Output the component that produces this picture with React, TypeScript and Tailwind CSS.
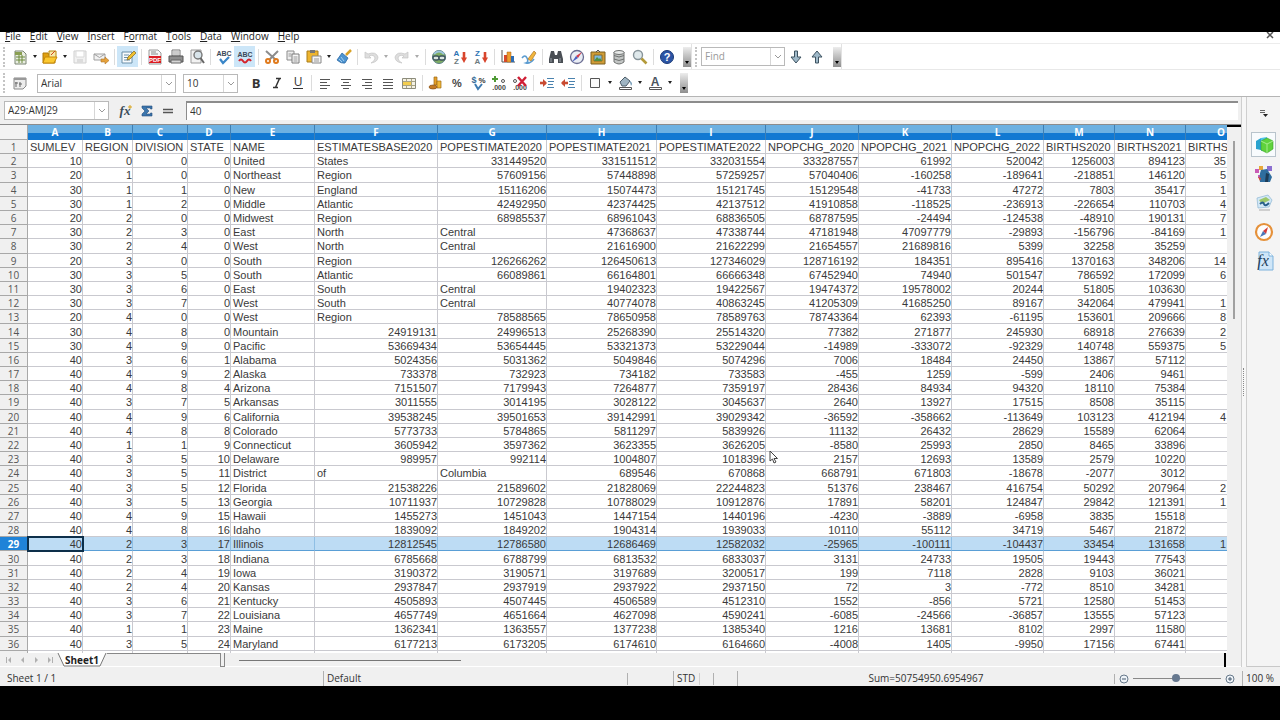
import { useState } from 'react'
import type { ReactNode } from 'react'
import clsx from 'clsx'

const MENUS = ['File', 'Edit', 'View', 'Insert', 'Format', 'Tools', 'Data', 'Window', 'Help']
const MENU_KEYS = [0, 0, 0, 0, 1, 0, 0, 0, 0]

const COLUMNS = [
  { id: 'A', width: 'w-[55px]' },
  { id: 'B', width: 'w-[50px]' },
  { id: 'C', width: 'w-[55px]' },
  { id: 'D', width: 'w-[43px]' },
  { id: 'E', width: 'w-[84px]' },
  { id: 'F', width: 'w-[123px]' },
  { id: 'G', width: 'w-[109px]' },
  { id: 'H', width: 'w-[110px]' },
  { id: 'I', width: 'w-[109px]' },
  { id: 'J', width: 'w-[93px]' },
  { id: 'K', width: 'w-[93px]' },
  { id: 'L', width: 'w-[92px]' },
  { id: 'M', width: 'w-[71px]' },
  { id: 'N', width: 'w-[71px]' },
  { id: 'O', width: 'w-[71px]' },
]

const SHEET = `
SUMLEV,REGION,DIVISION,STATE,NAME,ESTIMATESBASE2020,POPESTIMATE2020,POPESTIMATE2021,POPESTIMATE2022,NPOPCHG_2020,NPOPCHG_2021,NPOPCHG_2022,BIRTHS2020,BIRTHS2021,BIRTHS2
10,0,0,0,United,States,331449520,331511512,332031554,333287557,61992,520042,1256003,894123,35
20,1,0,0,Northeast,Region,57609156,57448898,57259257,57040406,-160258,-189641,-218851,146120,5
30,1,1,0,New,England,15116206,15074473,15121745,15129548,-41733,47272,7803,35417,1
30,1,2,0,Middle,Atlantic,42492950,42374425,42137512,41910858,-118525,-236913,-226654,110703,4
20,2,0,0,Midwest,Region,68985537,68961043,68836505,68787595,-24494,-124538,-48910,190131,7
30,2,3,0,East,North,Central,47368637,47338744,47181948,47097779,-29893,-156796,-84169,1
30,2,4,0,West,North,Central,21616900,21622299,21654557,21689816,5399,32258,35259,
20,3,0,0,South,Region,126266262,126450613,127346029,128716192,184351,895416,1370163,348206,14
30,3,5,0,South,Atlantic,66089861,66164801,66666348,67452940,74940,501547,786592,172099,6
30,3,6,0,East,South,Central,19402323,19422567,19474372,19578002,20244,51805,103630,
30,3,7,0,West,South,Central,40774078,40863245,41205309,41685250,89167,342064,479941,1
20,4,0,0,West,Region,78588565,78650958,78589763,78743364,62393,-61195,153601,209666,8
30,4,8,0,Mountain,24919131,24996513,25268390,25514320,77382,271877,245930,68918,276639,2
30,4,9,0,Pacific,53669434,53654445,53321373,53229044,-14989,-333072,-92329,140748,559375,5
40,3,6,1,Alabama,5024356,5031362,5049846,5074296,7006,18484,24450,13867,57112,
40,4,9,2,Alaska,733378,732923,734182,733583,-455,1259,-599,2406,9461,
40,4,8,4,Arizona,7151507,7179943,7264877,7359197,28436,84934,94320,18110,75384,
40,3,7,5,Arkansas,3011555,3014195,3028122,3045637,2640,13927,17515,8508,35115,
40,4,9,6,California,39538245,39501653,39142991,39029342,-36592,-358662,-113649,103123,412194,4
40,4,8,8,Colorado,5773733,5784865,5811297,5839926,11132,26432,28629,15589,62064,
40,1,1,9,Connecticut,3605942,3597362,3623355,3626205,-8580,25993,2850,8465,33896,
40,3,5,10,Delaware,989957,992114,1004807,1018396,2157,12693,13589,2579,10220,
40,3,5,11,District,of,Columbia,689546,670868,668791,671803,-18678,-2077,3012,
40,3,5,12,Florida,21538226,21589602,21828069,22244823,51376,238467,416754,50292,207964,2
40,3,5,13,Georgia,10711937,10729828,10788029,10912876,17891,58201,124847,29842,121391,1
40,4,9,15,Hawaii,1455273,1451043,1447154,1440196,-4230,-3889,-6958,3835,15518,
40,4,8,16,Idaho,1839092,1849202,1904314,1939033,10110,55112,34719,5467,21872,
40,2,3,17,Illinois,12812545,12786580,12686469,12582032,-25965,-100111,-104437,33454,131658,1
40,2,3,18,Indiana,6785668,6788799,6813532,6833037,3131,24733,19505,19443,77543,
40,2,4,19,Iowa,3190372,3190571,3197689,3200517,199,7118,2828,9103,36021,
40,2,4,20,Kansas,2937847,2937919,2937922,2937150,72,3,-772,8510,34281,
40,3,6,21,Kentucky,4505893,4507445,4506589,4512310,1552,-856,5721,12580,51453,
40,3,7,22,Louisiana,4657749,4651664,4627098,4590241,-6085,-24566,-36857,13555,57123,
40,1,1,23,Maine,1362341,1363557,1377238,1385340,1216,13681,8102,2997,11580,
40,3,5,24,Maryland,6177213,6173205,6174610,6164660,-4008,1405,-9950,17156,67441,
`

const ROWS = SHEET.trim().split('\n').map((line) => line.split(','))
const SELECTED_ROW = 29

const ICONS: Record<string, ReactNode> = {
  new: (
    <>
      <path d="M3 2h8l3 3v10H3z" fill="#e9eee2" stroke="#7b8573" />
      <path d="M4 8h9M4 11h9M7 6v8M10 6v8" stroke="#6d8a3c" />
      <path d="M3 3h7v3H3z" fill="#8a9f52" />
    </>
  ),
  open: (
    <>
      <path d="M1 4h5l1 2h6v8H1z" fill="#e0a010" stroke="#b07a08" />
      <path d="M7 2h7v7H7z" fill="#f7e9a8" stroke="#b8860b" />
      <path d="M3 8h12l-3 6H1z" fill="#fbc931" stroke="#c88a0a" />
      <path d="M9 6l4-4" stroke="#d2451e" />
    </>
  ),
  save: (
    <g opacity=".5">
      <path d="M2 2h12v12H2z" fill="#e4e4e4" stroke="#a3a3a3" />
      <path d="M4 2h8v6H4z" fill="#fff" stroke="#b5b5b5" />
      <path d="M5 10h6v4H5z" fill="#bbb" />
    </g>
  ),
  mail: (
    <>
      <path d="M1 5h11v6H1z" fill="#f2f2f2" stroke="#a0a0a0" />
      <path d="M1 5l5.500 3.500L12 5" stroke="#a0a0a0" fill="none" />
      <path d="M8 10h4V8l4 3.500-4 3.500v-2H8z" fill="#e6a23c" stroke="#b0762a" strokeWidth=".6" />
    </>
  ),
  edit: (
    <>
      <path d="M2 3h10v11H2z" fill="#f8fbfd" stroke="#6b8fa8" />
      <path d="M4 6h5M4 8.500h4M4 11h6" stroke="#6b8fa8" />
      <path d="M7 11l1-3 6-6 2 2-6 6z" fill="#f0c030" stroke="#7c6420" strokeWidth=".7" />
    </>
  ),
  pdf: (
    <>
      <path d="M2 1h9l3 3v11H2z" fill="#f5f5f5" stroke="#999" />
      <path d="M4 3h5M4 5h7" stroke="#888" />
      <path d="M2 7h12v7H2z" fill="#dc1c24" />
      <text x="8" y="13" fontSize="6" fontWeight="700" textAnchor="middle" fill="#fff" fontFamily="Liberation Sans, sans-serif">PDF</text>
    </>
  ),
  print: (
    <>
      <path d="M4 1h8v6H4z" fill="#fff" stroke="#777" />
      <path d="M1 7h14v6H1z" fill="#8e8e8e" stroke="#555" />
      <path d="M3 11h10v3H3z" fill="#d6d6d6" stroke="#666" />
      <path d="M5 3h6M5 5h6" stroke="#999" />
    </>
  ),
  preview: (
    <>
      <path d="M2 1h10v13H2z" fill="#f2f2f2" stroke="#999" />
      <circle cx="9" cy="6" r="4" fill="#d8e4ea" stroke="#777" strokeWidth="1.400" />
      <path d="M11.500 9l3.500 5" stroke="#666" strokeWidth="2" />
    </>
  ),
  spell: (
    <>
      <text x="8" y="7" fontSize="7" fontWeight="700" textAnchor="middle" fill="#3b4a58" fontFamily="Liberation Sans, sans-serif">ABC</text>
      <path d="M4 10l3 4 6-6" stroke="#3a86c8" strokeWidth="2.200" fill="none" />
    </>
  ),
  autospell: (
    <>
      <text x="8" y="8" fontSize="7" fontWeight="700" textAnchor="middle" fill="#3b4a58" fontFamily="Liberation Sans, sans-serif">ABC</text>
      <path d="M2 12q2-3 4 0t4 0 4 0" stroke="#d5232b" strokeWidth="2" fill="none" />
    </>
  ),
  cut: (
    <>
      <path d="M2 2l10 9M14 2L5 11" stroke="#8c8c8c" strokeWidth="2" />
      <circle cx="4" cy="12" r="2" fill="none" stroke="#e07a1c" strokeWidth="2" />
      <circle cx="12" cy="12" r="2" fill="none" stroke="#e07a1c" strokeWidth="2" />
    </>
  ),
  copy: (
    <>
      <path d="M2 2h7v9H2z" fill="#eee" stroke="#8b8b8b" />
      <path d="M7 5h7v9H7z" fill="#f6f6f6" stroke="#7b7b7b" />
      <path d="M8.500 8h4M8.500 10h4M8.500 12h4M3.500 5h3M3.500 7h3" stroke="#999" />
    </>
  ),
  paste: (
    <>
      <path d="M1 2h11v11H1z" fill="#eeb52e" stroke="#a87c1a" />
      <path d="M4 1h5v3H4z" fill="#777" />
      <path d="M6 7h9v7H6z" fill="#f5f5f5" stroke="#888" />
      <path d="M8 10h5M8 12h5" stroke="#999" />
    </>
  ),
  brush: (
    <>
      <path d="M15 1l-5 5" stroke="#d9a227" strokeWidth="2.500" />
      <path d="M6 4l6 5-3 5q-4 1-8-3z" fill="#4d94d0" stroke="#2d6aa5" strokeWidth=".8" />
      <path d="M3 10l3 3M5 8l3 4" stroke="#b9dcf5" strokeWidth=".8" />
    </>
  ),
  undo: <path d="M2 3v6h6L6 7q5-2 6 2 0 3-4 5 7-1 7-6-2-6-10-3z" fill="#dedede" stroke="#c4c4c4" strokeWidth=".7" />,
  redo: <path d="M14 3v6H8l2-2Q5 5 4 9q0 3 4 5-7-1-7-6 2-6 10-3z" fill="#dedede" stroke="#c4c4c4" strokeWidth=".7" />,
  link: (
    <>
      <circle cx="8" cy="8" r="6.500" fill="#7fae63" stroke="#5c8088" />
      <path d="M3 5q5-5 10 0" stroke="#9cc4dc" strokeWidth="2" fill="none" />
      <rect x="2" y="7" width="6" height="4" rx="2" fill="#dbe6e2" stroke="#3f565f" strokeWidth="1.300" />
      <rect x="8" y="7" width="6" height="4" rx="2" fill="#dbe6e2" stroke="#3f565f" strokeWidth="1.300" />
    </>
  ),
  sortaz: (
    <>
      <text x="4.500" y="7" fontSize="8" fontWeight="700" textAnchor="middle" fill="#2f74b5" fontFamily="Liberation Sans, sans-serif">A</text>
      <text x="4.500" y="15" fontSize="8" fontWeight="700" textAnchor="middle" fill="#6c7a80" fontFamily="Liberation Sans, sans-serif">Z</text>
      <path d="M12 3v7" stroke="#d8442c" strokeWidth="2.600" />
      <path d="M9 8.500h6L12 14z" fill="#d8442c" />
    </>
  ),
  sortza: (
    <>
      <text x="4.500" y="7" fontSize="8" fontWeight="700" textAnchor="middle" fill="#2f74b5" fontFamily="Liberation Sans, sans-serif">Z</text>
      <text x="4.500" y="15" fontSize="8" fontWeight="700" textAnchor="middle" fill="#6c7a80" fontFamily="Liberation Sans, sans-serif">A</text>
      <path d="M12 3v7" stroke="#d8442c" strokeWidth="2.600" />
      <path d="M9 8.500h6L12 14z" fill="#d8442c" />
    </>
  ),
  chart: (
    <>
      <path d="M2 1v12h13" stroke="#555" fill="none" />
      <path d="M4 6h3v7H4z" fill="#d9482b" />
      <path d="M7 3h4v10H7z" fill="#ee9d2e" stroke="#a3601b" strokeWidth=".5" />
      <path d="M11 7h3v6h-3z" fill="#2d6db5" />
    </>
  ),
  draw: (
    <>
      <path d="M1 9q3-4 5 0t-1 5q4 1 8-4" stroke="#5b9bd0" strokeWidth="1.600" fill="none" />
      <path d="M7 10l6-8 2 2-5 8z" fill="#f2b63c" stroke="#a9752a" strokeWidth=".7" />
    </>
  ),
  binoculars: (
    <>
      <path d="M3 2h3l1 4h2l1-4h3l2 8v4h-5v-4H6v4H1v-4z" fill="#4a4f55" />
      <path d="M3 9v4M12 9v4" stroke="#9aa2a9" />
    </>
  ),
  navigator: (
    <>
      <circle cx="8" cy="8" r="6.500" fill="#e9edf5" stroke="#6a6d92" strokeWidth="1.300" />
      <path d="M13 3L9 9 7 7z" fill="#d53a49" />
      <path d="M3 13l4-6 2 2z" fill="#4a5fc0" />
    </>
  ),
  gallery: (
    <>
      <path d="M1 3h14v12H1z" fill="#cf9c36" stroke="#7d6023" />
      <path d="M4 6h8v6H4z" fill="#79b9dd" stroke="#8a6a28" />
      <path d="M4 12l3-4 2 2 1-1 2 3z" fill="#4d8f42" />
      <path d="M6 3l2-2 2 2" stroke="#555" fill="none" />
    </>
  ),
  database: (
    <>
      <path d="M3 3v10q5 4 10 0V3z" fill="#c2c5c4" stroke="#6e7170" />
      <ellipse cx="8" cy="3.500" rx="5" ry="2" fill="#e8eae9" stroke="#6e7170" />
      <path d="M3 6.500q5 3 10 0M3 10q5 3 10 0" stroke="#6e7170" fill="none" />
    </>
  ),
  magnifier: (
    <>
      <circle cx="6" cy="6" r="4.500" fill="#dfe9ec" stroke="#87949a" strokeWidth="1.400" />
      <path d="M9.500 9.500l5 5" stroke="#b39a3a" strokeWidth="2.600" />
    </>
  ),
  help: (
    <>
      <circle cx="8" cy="8" r="6.500" fill="#2c55a5" stroke="#1a3a78" />
      <text x="8" y="12" fontSize="11" fontWeight="700" textAnchor="middle" fill="#fff" fontFamily="Liberation Sans, sans-serif">?</text>
    </>
  ),
  down: <path d="M6.500 2h3v6H13l-5 6-5-6h3.500z" fill="#9fb9c9" stroke="#3d5260" />,
  up: <path d="M6.500 14h3V8H13L8 2 3 8h3.500z" fill="#9fb9c9" stroke="#3d5260" />,
  styles: (
    <>
      <path d="M2 3h12v8l-3 3H2z" fill="#ececec" stroke="#888" />
      <path d="M2 3h12v2H2z" fill="#999" />
      <path d="M4 7v5M3 8h3M8 7v5M7 9h3" stroke="#666" />
    </>
  ),
  bold: <text x="8" y="13" fontSize="13" fontWeight="700" textAnchor="middle" fill="#333" fontFamily="Open Sans, sans-serif">B</text>,
  italic: <path d="M7 3.500h5M10.500 3.500l-4 9M4 12.500h5" stroke="#333" strokeWidth="1.500" />,
  underline: (
    <>
      <text x="8" y="11" fontSize="12" textAnchor="middle" fill="#333" fontFamily="Open Sans, sans-serif">U</text>
      <path d="M3 13.500h10" stroke="#333" />
    </>
  ),
  left: <path d="M3 4.500h10M3 7.500h7M3 10.500h10M3 13.500h7" stroke="#555" />,
  center: <path d="M3 4.500h10M5 7.500h6M3 10.500h10M5 13.500h6" stroke="#555" />,
  right: <path d="M3 4.500h10M6 7.500h7M3 10.500h10M6 13.500h7" stroke="#555" />,
  justify: <path d="M3 4.500h10M3 7.500h10M3 10.500h10M3 13.500h10" stroke="#555" />,
  merge: (
    <>
      <path d="M1.500 3.500h13v10h-13z" fill="#f4f1e4" stroke="#8c8c7c" />
      <path d="M2 6h8v4H2z" fill="#f3cd4e" />
      <path d="M2 6.500h12M2 10.500h12M5.500 4v3M10.500 4v9M5.500 10v3" stroke="#a8a384" />
    </>
  ),
  currency: (
    <>
      <path d="M6 2h3v8H6z" fill="#e5a02a" stroke="#9b6714" strokeWidth=".7" />
      <path d="M9 6h4v7H9z" fill="#f0b838" stroke="#9b6714" strokeWidth=".7" />
      <ellipse cx="5" cy="12" rx="4" ry="2" fill="#c47a24" stroke="#85501a" strokeWidth=".7" />
    </>
  ),
  percent: <text x="8" y="12" fontSize="11" fontWeight="700" textAnchor="middle" fill="#444" fontFamily="Liberation Sans, sans-serif">%</text>,
  number: (
    <>
      <text x="4" y="8" fontSize="9" fontWeight="700" textAnchor="middle" fill="#356a96" fontFamily="Liberation Sans, sans-serif">$</text>
      <text x="12" y="8" fontSize="8" fontWeight="700" textAnchor="middle" fill="#333" fontFamily="Liberation Sans, sans-serif">%</text>
      <path d="M5 9l3 5 4-5" stroke="#3d7ab0" strokeWidth="2" fill="none" />
    </>
  ),
  adddec: (
    <>
      <path d="M4 1v6M1 4h6" stroke="#4f9a35" strokeWidth="2" />
      <circle cx="12" cy="6" r="1.500" fill="none" stroke="#555" />
      <text x="8" y="15" fontSize="7" fontWeight="700" textAnchor="middle" fill="#444" fontFamily="Liberation Sans, sans-serif">.000</text>
    </>
  ),
  deldec: (
    <>
      <circle cx="3" cy="6" r="1.500" fill="none" stroke="#555" />
      <text x="8" y="15" fontSize="7" fontWeight="700" textAnchor="middle" fill="#444" fontFamily="Liberation Sans, sans-serif">.000</text>
      <path d="M6 2l8 9M14 2l-8 9" stroke="#d01f36" strokeWidth="2.400" />
    </>
  ),
  indent: (
    <>
      <path d="M1 8h6" stroke="#c94b32" strokeWidth="2.600" />
      <path d="M4 4l4 4-4 4z" fill="#c94b32" />
      <path d="M8 3.500h7M9 6.500h6M9 9.500h5M8 12.500h7" stroke="#4a82ae" />
    </>
  ),
  outdent: (
    <>
      <path d="M2 8h6" stroke="#c94b32" strokeWidth="2.600" />
      <path d="M5 4L1 8l4 4z" fill="#c94b32" />
      <path d="M8 3.500h7M9 6.500h6M9 9.500h5M8 12.500h7" stroke="#4a82ae" />
    </>
  ),
  borders: <path d="M3.500 3.500h9v9h-9z" fill="#fafafa" stroke="#555" />,
  fill: (
    <>
      <path d="M3 7l5-5 5 4-4 5H5z" fill="#9fb4c2" stroke="#4b5b66" />
      <path d="M13 6q3 2 1 5z" fill="#4d7fa3" />
      <path d="M2.500 12.500h12v2h-12z" fill="#fff" stroke="#555" />
    </>
  ),
  color: (
    <>
      <text x="8" y="11" fontSize="12" fontWeight="700" textAnchor="middle" fill="#4b5560" fontFamily="Liberation Sans, sans-serif">A</text>
      <path d="M2.500 12.500h12v2h-12z" fill="#fff" stroke="#555" />
    </>
  ),
  fx: (
    <>
      <text x="7" y="12" fontSize="13" fontStyle="italic" fontWeight="700" textAnchor="middle" fill="#3b4c5a" fontFamily="Liberation Serif, serif">fx</text>
      <path d="M12 2v4M10 4h4" stroke="#d8a31b" />
    </>
  ),
  sigma: <path d="M3 3h10v3h-1.500V5H7l3 3-3 3h4.500v-1H13v3H3v-2l3-3-3-3z" fill="#3b76ad" stroke="#254f7c" strokeWidth=".6" />,
  equals: <path d="M3 6.500h10M3 9.500h10" stroke="#555" strokeWidth="1.500" />,
}

const SIDE_ICONS: Record<string, ReactNode> = {
  Properties: (
    <>
      <path d="M2 6l5-3v12l-5-1z" fill="#2aa3cf" />
      <path d="M7 3l6-1v13l-6 1z" fill="#4cc3e8" />
      <path d="M7 6l6-3 6 3v8l-6 4-6-3z" fill="#5fd23c" stroke="#39a028" strokeWidth=".6" />
      <path d="M7 6l6 3 6-3M13 9v9" stroke="#a5ec8c" fill="none" />
    </>
  ),
  Styles: (
    <>
      <path d="M1 5h4v4H1zM4 11h3v3H4z" fill="#c95bb5" />
      <path d="M5 2h4v4H5z" fill="#e8a838" />
      <path d="M13 2h5v5h-5z" fill="#8c6fd0" />
      <path d="M7 6l6-1 5 8-2 5H6q-1-7 1-12z" fill="#2f6d9e" />
      <path d="M12 9l3 1-1 8h-3z" fill="#1d3b56" />
      <path d="M4 13l3 1-1 3z" fill="#d8452e" />
    </>
  ),
  Gallery: (
    <>
      <path d="M3 5l11-3 4 5-3 7-11 1z" fill="#d3e8f6" stroke="#8db6d2" strokeWidth=".7" />
      <path d="M5 7l7-3 4 3-8 4z" fill="#9cc76a" />
      <path d="M6 11q3-3 4 0t5-1" stroke="#285f8c" strokeWidth="2" fill="none" />
      <path d="M5 17h11" stroke="#cfcfcf" strokeWidth="2" />
    </>
  ),
  Navigator: (
    <>
      <circle cx="10" cy="10" r="8" fill="#fdfdfd" stroke="#e5913a" strokeWidth="2.200" />
      <path d="M14 5l-2 7-3-3z" fill="#d33b3b" />
      <path d="M6 15l3-6 3 3z" fill="#4a77b8" />
    </>
  ),
  Functions: (
    <>
      <path d="M5 1h10l4 4v14H5z" fill="#cfe6f8" stroke="#7db2dc" />
      <path d="M15 1v4h4" fill="#fff" stroke="#7db2dc" />
      <text x="9" y="15" fontSize="16" fontStyle="italic" textAnchor="middle" fill="#1f3f5c" fontFamily="Liberation Serif, serif">fx</text>
    </>
  ),
}

// '|' is a separator, '>' a drop-down arrow, '=>' a wider one
const STANDARD = [
  'new', '>', 'open', '>', 'save', 'mail', '|', 'edit', '|', 'pdf', 'print', 'preview', '|', 'spell', 'autospell', '|',
  'cut', 'copy', 'paste', '>', 'brush', '|', 'undo', '=>', 'redo', '=>', '|', 'link', 'sortaz', 'sortza', '|',
  'chart', 'draw', '|', 'binoculars', 'navigator', 'gallery', 'database', 'magnifier', '|', 'help',
]
const FORMATTING = [
  'bold', 'italic', 'underline', '|', 'left', 'center', 'right', 'justify', 'merge', '|',
  'currency', 'percent', 'number', 'adddec', 'deldec', '|', 'indent', 'outdent', '|',
  'borders', '>', 'fill', '>', 'color', '>',
]
const ACTIVE = ['edit', 'autospell']

function Icon({ name }: { name: string }) {
  return (
    <svg viewBox="0 0 16 16" className="h-4 w-4 shrink-0" fill="none">
      {ICONS[name]}
    </svg>
  )
}

function ToolButton({ name }: { name: string }) {
  return (
    <button
      aria-label={name}
      className={clsx(
        'flex h-[21px] w-[21px] shrink-0 items-center justify-center',
        ACTIVE.includes(name) && 'bg-[#cce6f8]'
      )}
    >
      <Icon name={name} />
    </button>
  )
}

function Tools({ items }: { items: string[] }) {
  return (
    <>
      {items.map((item, i) => {
        if (item === '|') {
          return (
            <span key={i} className="flex h-4 w-1.5 shrink-0 justify-center">
              <span className="w-px bg-[#dcdcdc]" />
            </span>
          )
        }
        if (item === '>' || item === '=>') {
          return (
            <button
              key={i}
              aria-label="More"
              className={clsx('flex h-5 shrink-0 items-center justify-center', item === '>' ? 'w-[9px]' : 'w-2.5')}
            >
              <svg viewBox="0 0 6 4" className="h-1 w-1.5">
                <path d="M1 0h4L3 3z" fill={item === '>' ? '#222' : '#aaa'} />
              </svg>
            </button>
          )
        }
        return <ToolButton key={i} name={item} />
      })}
    </>
  )
}

function Grip() {
  return <span className="mr-1 ml-[3px] h-5 shrink-0 border-l-2 border-dotted border-[#c4c4c4]" />
}

function Overflow() {
  return (
    <button
      aria-label="More controls"
      className="flex h-5 w-2 shrink-0 items-end justify-center bg-linear-to-b from-[#ededed] to-[#8f8f8f] pb-0.5"
    >
      <svg viewBox="0 0 6 4" className="h-1 w-1.5">
        <path d="M1 0h4L3 3z" fill="#000" />
      </svg>
    </button>
  )
}

function Combo({ label, value, width, muted }: { label: string; value: string; width: string; muted?: boolean }) {
  const [text, setText] = useState(muted ? '' : value)
  return (
    <div className={clsx('flex h-[19px] shrink-0 border border-[#b9b9b9] bg-white', width)}>
      <input
        aria-label={label}
        placeholder={muted ? value : undefined}
        value={text}
        onChange={(e) => setText(e.target.value)}
        className="w-full min-w-0 bg-transparent pl-[3px] text-[#333] outline-none placeholder:text-[#9a9a9a]"
      />
      <button
        aria-label={`${label} list`}
        className="flex w-3.5 shrink-0 items-center justify-center border-l border-[#d6d6d6]"
      >
        <svg viewBox="0 0 8 5" className="h-[5px] w-2">
          <path d="M1 1l3 3 3-3" stroke="#999" fill="none" />
        </svg>
      </button>
    </div>
  )
}

function Sheet() {
  return (
    <table className="h-full w-[1257px] table-fixed border-separate border-spacing-0 bg-white">
      <colgroup>
        <col className="w-7" />
        {COLUMNS.map((col) => (
          <col key={col.id} className={col.width} />
        ))}
      </colgroup>
      <thead>
        <tr className="h-[15px]">
          <th className="border-r border-b border-[#a8a8a8] bg-[#f3f3f3] p-0" />
          {COLUMNS.map((col) => (
            <th
              key={col.id}
              className="border-r border-[#3d7fb5] bg-linear-to-b from-[#6db1e2] from-50% to-[#1279d2] to-50% p-0 font-['Open_Sans',sans-serif] text-[10px] leading-[15px] font-bold text-white"
            >
              {col.id}
            </th>
          ))}
        </tr>
      </thead>
      <tbody className="text-[11px] leading-3 text-[#3a3a3a]">
        {ROWS.map((row, r) => {
          const selected = r + 1 === SELECTED_ROW
          return (
            <tr key={r}>
              <th
                className={clsx(
                  "border-r border-b border-[#a8a8a8] p-0 pt-px font-['Open_Sans',sans-serif] text-[10px]",
                  selected ? 'bg-[#1f83d8] font-bold text-white' : 'bg-[#f0f0f0] font-normal text-[#555]'
                )}
              >
                {r + 1}
              </th>
              {row.map((cell, c) => (
                <td
                  key={c}
                  className={clsx(
                    'border-r border-b pt-px pb-0 pl-0.5 whitespace-nowrap',
                    c === 14 && r > 0 ? 'pr-[30px]' : 'pr-0',
                    /^-?\d/.test(cell) ? 'text-right' : 'text-left',
                    selected ? 'border-[#8fbfe4] border-b-[#5a9fd6] bg-[#bddcf4]' : 'border-[#c9c9cf]',
                    selected && c === 0 && 'outline-2 -outline-offset-1 outline-[#0d2f4a]'
                  )}
                >
                  {cell}
                </td>
              ))}
            </tr>
          )
        })}
        <tr className="h-0.5">
          <th className="border-r border-[#a8a8a8] bg-[#f0f0f0] p-0" />
          {COLUMNS.map((col) => (
            <td key={col.id} className="border-r border-[#c9c9cf] p-0" />
          ))}
        </tr>
      </tbody>
    </table>
  )
}

export default function App() {
  const [formula, setFormula] = useState('40')
  const [zoom, setZoom] = useState(49)

  return (
    <div className="flex h-screen flex-col bg-black pt-8 pb-[34px] font-['Open_Sans',sans-serif] text-[10px] text-[#333]">
      {/* Menu bar */}
      <header className="flex h-3 shrink-0 items-start justify-between border-b border-[#ececec] bg-white pr-1.5 pl-[5px]">
        <nav className="flex gap-[9px]">
          {MENUS.map((menu, i) => (
            <a key={menu} href="#" className="leading-2 text-[#222]">
              {menu.slice(0, MENU_KEYS[i])}
              <span className="underline">{menu[MENU_KEYS[i]]}</span>
              {menu.slice(MENU_KEYS[i] + 1)}
            </a>
          ))}
        </nav>
        <button aria-label="Close document">
          <svg viewBox="0 0 8 8" className="h-2 w-2">
            <path d="M1 0l6 6M7 0L1 6" stroke="#555" strokeWidth="1.500" />
          </svg>
        </button>
      </header>

      {/* Standard toolbar */}
      <div className="flex h-[26px] shrink-0 items-center border-b border-[#e8e8e8] bg-white">
        <Grip />
        <Tools items={STANDARD} />
        <span className="w-1.5" />
        <Overflow />
        <div className="flex h-full items-center border-r border-l border-[#e2e2e2]">
          <Grip />
          <Combo label="Find" value="Find" width="w-[84px]" muted />
          <ToolButton name="down" />
          <ToolButton name="up" />
          <span className="w-1.5" />
          <Overflow />
        </div>
      </div>

      {/* Formatting toolbar */}
      <div className="flex h-[26px] shrink-0 items-center bg-white">
        <Grip />
        <ToolButton name="styles" />
        <span className="w-[7px]" />
        <Combo label="Font name" value="Arial" width="w-[139px]" />
        <span className="w-[7px]" />
        <Combo label="Font size" value="10" width="w-[55px]" />
        <span className="w-[7px]" />
        <Tools items={FORMATTING} />
        <span className="w-1.5" />
        <Overflow />
      </div>

      <div className="flex min-h-0 flex-1 border-t border-[#b5b5b5] bg-[#f0f0f0]">
        <main className="flex min-w-0 flex-1 flex-col">
          {/* Formula bar */}
          <div className="flex h-[27px] shrink-0 items-center pr-[3px] pl-1">
            <Combo label="Name box" value="A29:AMJ29" width="w-[105px]" />
            <span className="w-1.5" />
            <ToolButton name="fx" />
            <ToolButton name="sigma" />
            <ToolButton name="equals" />
            <input
              aria-label="Formula"
              value={formula}
              onChange={(e) => setFormula(e.target.value)}
              className="ml-2 h-[19px] min-w-0 flex-1 border-t-2 border-l border-[#8c8c8c] bg-white pb-0.5 pl-[3px] outline-none"
            />
          </div>

          {/* Sheet and vertical scroll bar */}
          <div className="relative flex min-h-0 flex-1 border-t border-[#8c8c8c]">
            <div className="min-w-0 flex-1 overflow-hidden font-['Liberation_Sans',Arial,sans-serif]">
              <Sheet />
            </div>
            <div className="flex w-3.5 shrink-0 flex-col items-center border-t-2 border-black pt-3.5">
              <span className="h-[178px] w-0.5 bg-[#a0a0a0]" />
            </div>
            <svg viewBox="0 0 10 14" className="absolute top-[325px] left-[769px] h-3.5 w-2.5">
              <path d="M1 1v10l2.500-2 1.500 4 2-1-2-3.500h3.500z" fill="#fff" stroke="#444" />
            </svg>
          </div>

          {/* Sheet tabs and horizontal scroll bar */}
          <div className="flex h-3.5 shrink-0 items-start border-b border-white">
            <div className="flex h-3.5 w-[57px] items-center justify-around pl-0.5">
              {['First sheet', 'Previous sheet', 'Next sheet', 'Last sheet'].map((label, i) => (
                <button key={label} aria-label={label} className="h-1.5 w-1.5">
                  <svg viewBox="0 0 6 6" className="h-1.5 w-1.5">
                    {i === 0 && <path d="M0 0v6h1V0zM5 0v6L2 3z" fill="#b0b0b0" />}
                    {i === 1 && <path d="M4 0v6L1 3z" fill="#b0b0b0" />}
                    {i === 2 && <path d="M2 0v6l3-3z" fill="#b0b0b0" />}
                    {i === 3 && <path d="M1 0v6l3-3zM5 0v6h1V0z" fill="#b0b0b0" />}
                  </svg>
                </button>
              ))}
            </div>
            <button className="relative h-3.5 w-[50px] leading-3.5 font-bold text-[#222]">
              <svg viewBox="0 0 50 14" className="absolute inset-0 h-3.5 w-[50px]">
                <path d="M1 0l6 13h36l6-13" fill="#fff" stroke="#777" />
              </svg>
              <span className="relative">Sheet1</span>
            </button>
            <span className="h-px w-[113px] bg-[#888]" />
            <span className="h-3.5 w-[5px] border border-t-0 border-[#888]" />
            <span className="mt-[7px] ml-3.5 h-px w-[222px] bg-[#777]" />
            <span className="mr-[15px] ml-auto h-3.5 w-0.5 bg-black" />
          </div>
        </main>

        {/* Sidebar */}
        <div className="flex w-1.5 shrink-0 items-center border-r border-l border-[#cfcfcf] bg-[#f7f7f7]">
          <span className="ml-px h-7 border-l border-dotted border-[#888]" />
        </div>
        <aside className="flex w-[33px] shrink-0 flex-col items-center border-b border-[#c8c8c8] bg-[#f4f4f4]">
          <button aria-label="Sidebar settings" className="mt-2 mb-[11px] flex h-4 w-4 items-center justify-center">
            <svg viewBox="0 0 8 8" className="h-2 w-2">
              <path d="M0 1.500h5M0 3.500h5" stroke="#666" />
              <path d="M3 5h5L5.500 8z" fill="#222" />
            </svg>
          </button>
          {Object.keys(SIDE_ICONS).map((name, i) => (
            <button
              key={name}
              aria-label={name}
              className={clsx(
                'mb-1 flex h-[25px] w-[25px] items-center justify-center',
                i === 0 && 'border border-[#b9c4cc] bg-[#f8fbfd]'
              )}
            >
              <svg viewBox="0 0 20 20" className="h-5 w-5" fill="none">
                {SIDE_ICONS[name]}
              </svg>
            </button>
          ))}
        </aside>
      </div>

      {/* Status bar */}
      <footer className="flex h-[19px] shrink-0 items-center bg-[#f0f0f0] pt-1">
        <span className="w-[323px] shrink-0 pl-[7px]">Sheet 1 / 1</span>
        <span className="w-[304px] shrink-0 border-l border-[#b0b0b0] pl-[3px]">Default</span>
        <span className="h-3 w-[46px] shrink-0 border-l border-[#b0b0b0]" />
        <span className="w-[26px] shrink-0 border-l border-[#b0b0b0] pl-[3px]">STD</span>
        <span className="h-3 w-3.5 shrink-0 border-l border-[#d0d0d0]" />
        <span className="h-3 w-6 shrink-0 border-l border-[#b0b0b0]" />
        <span className="min-w-0 flex-1 border-l border-[#b0b0b0] text-center">Sum=50754950.6954967</span>
        <div className="flex shrink-0 items-center gap-1 border-l border-[#b0b0b0] pr-[7px] pl-1">
          <button aria-label="Zoom out">
            <svg viewBox="0 0 10 10" className="h-2.5 w-2.5">
              <circle cx="5" cy="5" r="4" fill="#eef3f8" stroke="#66788a" />
              <path d="M3 5h4" stroke="#44586c" />
            </svg>
          </button>
          <input
            type="range"
            aria-label="Zoom"
            value={zoom}
            onChange={(e) => setZoom(Number(e.target.value))}
            className="h-2.5 w-[88px] appearance-none bg-transparent [&::-webkit-slider-runnable-track]:h-px [&::-webkit-slider-runnable-track]:bg-[#888] [&::-webkit-slider-thumb]:-mt-1 [&::-webkit-slider-thumb]:h-2 [&::-webkit-slider-thumb]:w-2 [&::-webkit-slider-thumb]:appearance-none [&::-webkit-slider-thumb]:rounded-full [&::-webkit-slider-thumb]:bg-[#66788f]"
          />
          <button aria-label="Zoom in">
            <svg viewBox="0 0 10 10" className="h-2.5 w-2.5">
              <circle cx="5" cy="5" r="4" fill="#eef3f8" stroke="#66788a" />
              <path d="M3 5h4M5 3v4" stroke="#44586c" />
            </svg>
          </button>
        </div>
        <span className="w-[38px] shrink-0 border-l border-[#b0b0b0] pl-[3px]">100 %</span>
      </footer>
    </div>
  )
}
